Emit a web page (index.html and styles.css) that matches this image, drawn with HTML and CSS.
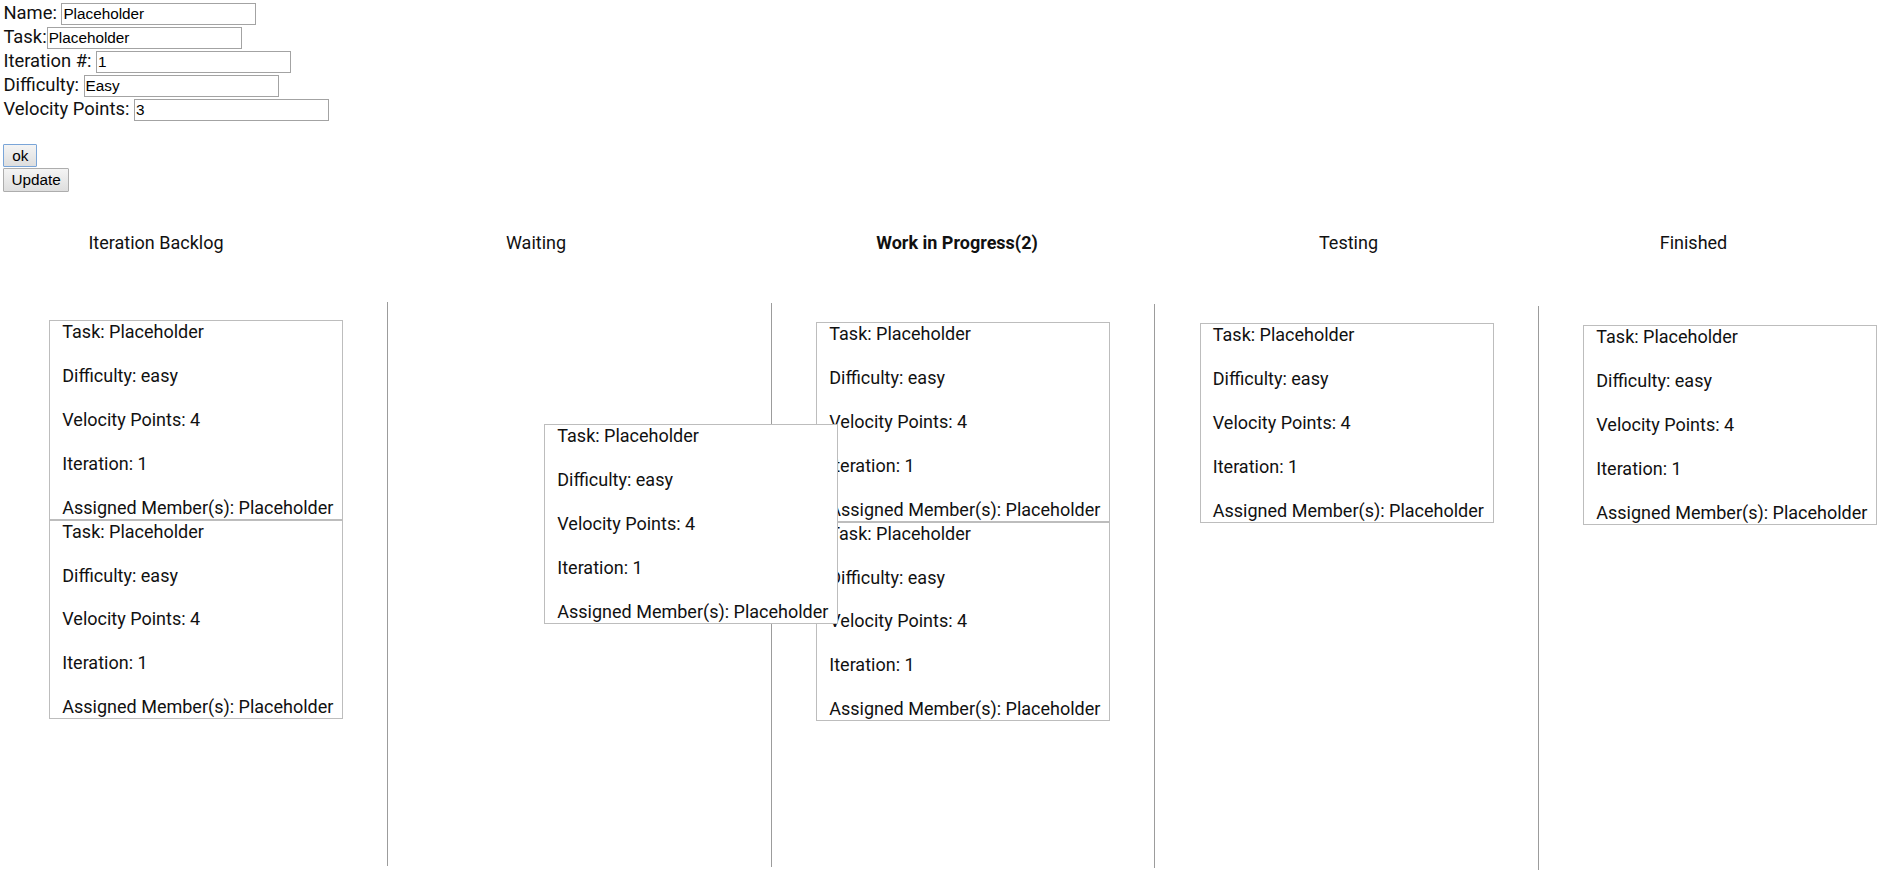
FILE: index.html
```html
<!DOCTYPE html>
<html lang="en">
<head>
<meta charset="utf-8">
<title>Kanban Board</title>
<link rel="stylesheet" href="styles.css">
</head>
<body>
<form class="task-form">
  <div class="row">Name: <input class="field" type="text" value="Placeholder"></div>
  <div class="row">Task:<input class="field" type="text" value="Placeholder"></div>
  <div class="row">Iteration #: <input class="field" type="text" value="1"></div>
  <div class="row">Difficulty: <input class="field" type="text" value="Easy"></div>
  <div class="row">Velocity Points: <input class="field" type="text" value="3"></div>
  <div class="actions">
    <button type="button" class="btn btn-ok">ok</button>
    <button type="button" class="btn">Update</button>
  </div>
</form>

<div class="headers">
  <div class="h h1">Iteration Backlog</div>
  <div class="h h2">Waiting</div>
  <div class="h h3 active">Work in Progress(2)</div>
  <div class="h h4">Testing</div>
  <div class="h h5">Finished</div>
</div>

<div class="board">
  <div class="col c1">
    <div class="card">
      <p>Task: Placeholder</p><p>Difficulty: easy</p><p>Velocity Points: 4</p><p>Iteration: 1</p><p>Assigned Member(s): Placeholder</p>
    </div>
    <div class="card">
      <p>Task: Placeholder</p><p>Difficulty: easy</p><p>Velocity Points: 4</p><p>Iteration: 1</p><p>Assigned Member(s): Placeholder</p>
    </div>
  </div>
  <div class="col c2">
    <div class="card dragging">
      <p>Task: Placeholder</p><p>Difficulty: easy</p><p>Velocity Points: 4</p><p>Iteration: 1</p><p>Assigned Member(s): Placeholder</p>
    </div>
  </div>
  <div class="col c3">
    <div class="card">
      <p>Task: Placeholder</p><p>Difficulty: easy</p><p>Velocity Points: 4</p><p>Iteration: 1</p><p>Assigned Member(s): Placeholder</p>
    </div>
    <div class="card">
      <p>Task: Placeholder</p><p>Difficulty: easy</p><p>Velocity Points: 4</p><p>Iteration: 1</p><p>Assigned Member(s): Placeholder</p>
    </div>
  </div>
  <div class="col c4">
    <div class="card">
      <p>Task: Placeholder</p><p>Difficulty: easy</p><p>Velocity Points: 4</p><p>Iteration: 1</p><p>Assigned Member(s): Placeholder</p>
    </div>
  </div>
  <div class="col c5">
    <div class="card">
      <p>Task: Placeholder</p><p>Difficulty: easy</p><p>Velocity Points: 4</p><p>Iteration: 1</p><p>Assigned Member(s): Placeholder</p>
    </div>
  </div>
</div>
</body>
</html>
```

FILE: styles.css
```css
html, body {
  margin: 0;
  padding: 0;
  background: #fff;
}

body {
  font-family: Roboto, "Noto Sans", sans-serif;
  font-size: 18.4px;
  line-height: 21.85px;
  color: #111;
  overflow: hidden;
}

.task-form {
  margin: 0;
  padding: 0.5px 0 0 3.4px;
}

.row {
  height: 24px;
  line-height: 24px;
  white-space: nowrap;
}

.field {
  font-family: "Liberation Sans", Arial, sans-serif;
  font-size: 15.3px;
  color: #000;
  width: 195px;
  height: 22.7px;
  box-sizing: border-box;
  border: 1px solid #a3a3a3;
  padding: 0 1px;
  margin: 2.2px 0 0 0;
  vertical-align: top;
  background: #fff;
  outline: none;
}

.actions {
  display: flex;
  flex-direction: column;
  align-items: flex-start;
  gap: 1px;
  margin-top: 23.5px;
}

.btn {
  font-family: "Liberation Sans", Arial, sans-serif;
  font-size: 15.3px;
  color: #000;
  height: 23.3px;
  padding: 0 7px;
  border: 1px solid #adadad;
  border-radius: 1px;
  background: linear-gradient(#f4f4f4, #dedede);
  line-height: 20px;
  margin: 0;
}

.btn-ok {
  min-width: 34.3px;
  border-color: #7aa5d8;
  margin-left: -0.3px;
}

.headers {
  display: flex;
  margin: 40.9px 0 0 4px;
  font-size: 18px;
}

.h {
  text-align: center;
  flex-shrink: 0;
}

.h1 { width: 304px; }
.h2 { width: 456px; }
.h3 { width: 386px; }
.h4 { width: 397px; }
.h5 { width: 293px; }

.active {
  font-weight: bold;
}

.board {
  display: flex;
  align-items: flex-start;
  margin: 46.5px 0 0 3.8px;
}

.col {
  position: relative;
  width: 383.5px;
  height: 564px;
  box-sizing: border-box;
  flex-shrink: 0;
  border-left: 1px solid #9c9c9c;
  padding: 19.3px 0 0 44.5px;
}

.c1 { border-left-color: transparent; }
.c2 { margin-top: 1.3px; }
.c3 { margin-top: 2px; }
.c4 { margin-top: 3px; }
.c5 { margin-top: 5px; width: 340px; }

.card {
  width: 294px;
  box-sizing: border-box;
  border: 1px solid #bdbdbd;
  padding-left: 12px;
  background: #fff;
  white-space: nowrap;
  font-size: 18px;
  line-height: 21.95px;
}

.card p {
  margin: 0;
}

.card p + p {
  margin-top: 21.95px;
}

.dragging {
  position: absolute;
  left: 156px;
  top: 122px;
  z-index: 1;
}
```
